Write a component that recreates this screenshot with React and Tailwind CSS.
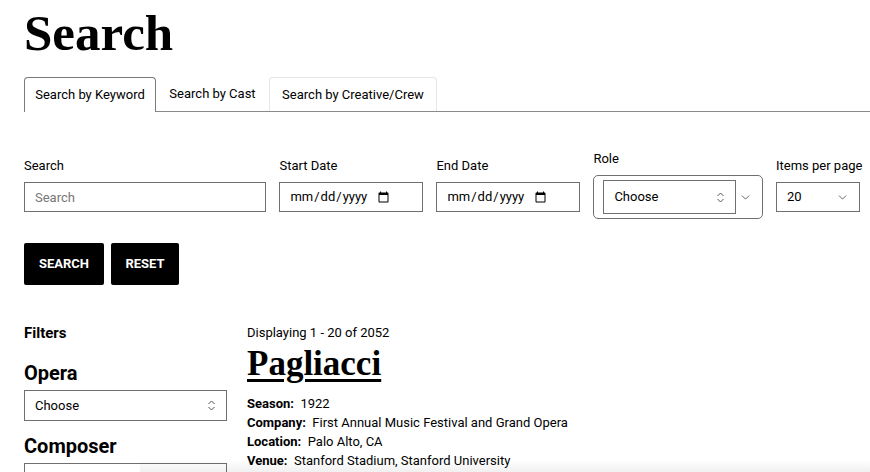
import { ChevronDown } from 'lucide-react'

const sans = "font-['Roboto','Liberation_Sans',sans-serif]"
const serif = "font-['Liberation_Serif','DejaVu_Serif',serif]"

function UpDown() {
  return (
    <svg width="9" height="11" viewBox="0 0 9 11" fill="none" stroke="#555" strokeWidth="1" className="shrink-0">
      <path d="M1.5 4 L4.5 1 L7.5 4" />
      <path d="M1.5 7 L4.5 10 L7.5 7" />
    </svg>
  )
}

function FakeSelect({ value, className, icon }) {
  return (
    <div className={`flex items-center justify-between border border-[#6f6f6f] bg-white px-[10px] text-[13px] text-black ${className}`}>
      <span>{value}</span>
      {icon}
    </div>
  )
}

function Field({ label, children, className }) {
  return (
    <div className={`flex flex-col gap-[8px] ${className}`}>
      <label className="whitespace-nowrap text-[13px] leading-[16px] text-black">{label}</label>
      {children}
    </div>
  )
}

function DateInput() {
  return (
    <input
      type="date"
      className={`h-[30px] w-full border border-[#6f6f6f] bg-white pl-[9px] pr-[30px] text-[13px] text-black ${sans}`}
    />
  )
}

export default function App() {
  return (
    <div className={`relative h-[472px] overflow-hidden bg-white text-black ${sans}`}>
      <div className="pl-[24px]">
        <h1 className={`pt-[3px] text-[51px] font-bold leading-[60px] ${serif}`}>Search</h1>

        {/* tabs */}
        <div className="mt-[14px] flex items-end">
          <div className="flex h-[35px] w-[132px] items-center justify-center rounded-t-[4px] border border-b-0 border-[#7a7a7a] text-[13px]">
            Search by Keyword
          </div>
          <div className="flex flex-1 items-end border-b border-[#8a8a8a]">
            <div className="flex h-[34px] w-[113px] items-center justify-center text-[13px]">Search by Cast</div>
            <div className="flex h-[34px] w-[168px] items-center justify-center rounded-t-[4px] border border-b-0 border-[#e6e6e6] text-[13px]">
              Search by Creative/Crew
            </div>
          </div>
        </div>

        {/* form */}
        <div className="mt-[39px] flex items-center gap-[13px] pr-[10px]">
          <Field label="Search" className="w-[243px]">
            <input
              placeholder="Search"
              className={`h-[30px] w-full border border-[#6f6f6f] px-[10px] text-[13px] placeholder:text-[#777] ${sans}`}
            />
          </Field>
          <Field label="Start Date" className="w-[144px]">
            <DateInput />
          </Field>
          <Field label="End Date" className="w-[144px]">
            <DateInput />
          </Field>
          <Field label="Role" className="w-[170px]">
            <div className="flex h-[44px] items-center rounded-[5px] border border-[#6f6f6f] pl-[9px] pr-[10px]">
              <FakeSelect value="Choose" className="h-[34px] w-[133px]" icon={<UpDown />} />
              <ChevronDown size={13} strokeWidth={1.5} className="ml-auto text-[#444]" />
            </div>
          </Field>
          <Field label="Items per page" className="w-[84px]">
            <FakeSelect
              value="20"
              className="h-[30px] w-full"
              icon={<ChevronDown size={13} strokeWidth={1.5} className="text-[#444]" />}
            />
          </Field>
        </div>

        {/* buttons */}
        <div className="mt-[24px] flex gap-[7px]">
          <button className="h-[42px] w-[80px] rounded-[2px] bg-black text-[13px] font-bold text-white">SEARCH</button>
          <button className="h-[42px] w-[68px] rounded-[2px] bg-black text-[13px] font-bold text-white">RESET</button>
        </div>

        {/* filters + results */}
        <div className="mt-[39px] flex gap-[20px]">
          <aside className="w-[203px] shrink-0">
            <h3 className="text-[15px] font-bold leading-[18px]">Filters</h3>
            <h2 className="mt-[19px] text-[20px] font-bold leading-[24px]">Opera</h2>
            <FakeSelect value="Choose" className="mt-[5px] h-[31px] w-full" icon={<UpDown />} />
            <h2 className="mt-[13px] text-[20px] font-bold leading-[24px]">Composer</h2>
            <div className="mt-[5px] h-[31px] w-full border border-[#6f6f6f]" />
          </aside>
          <main className="flex-1 pt-[1px]">
            <p className="text-[13px] leading-[16px]">Displaying 1 - 20 of 2052</p>
            <h2 className={`mt-[3px] text-[35px] font-bold leading-[40px] underline decoration-[3px] underline-offset-[4px] ${serif}`}>
              <a href="#">Pagliacci</a>
            </h2>
            <div className="mt-[10px] flex flex-col text-[13px] leading-[19px]">
              <p><b>Season:</b>&nbsp; 1922</p>
              <p><b>Company:</b>&nbsp; First Annual Music Festival and Grand Opera</p>
              <p><b>Location:</b>&nbsp; Palo Alto, CA</p>
              <p><b>Venue:</b>&nbsp; Stanford Stadium, Stanford University</p>
            </div>
          </main>
        </div>
      </div>
      {/* bottom fade */}
      <div className="pointer-events-none absolute bottom-0 left-[140px] right-0 h-[12px] bg-gradient-to-b from-transparent to-[#0000000f]" />
    </div>
  )
}
